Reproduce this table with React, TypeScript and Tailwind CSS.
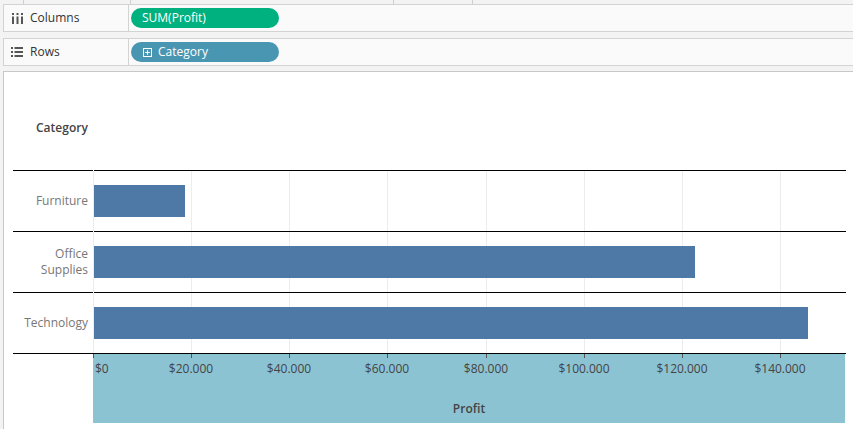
import React from "react"

const data = [
  { name: ["Furniture"], profit: 18451.27 },
  { name: ["Office", "Supplies"], profit: 122490.8 },
  { name: ["Technology"], profit: 145454.95 },
]

// pixels per dollar on the profit axis
const PX = 98.14 / 20000
const TICKS = [0, 20000, 40000, 60000, 80000, 100000, 120000, 140000]

const fmt = (v: number) => (v === 0 ? "$0" : "$" + (v / 1000).toFixed(0) + ".000")

function ColumnsIcon() {
  return (
    <svg width="11" height="11" viewBox="0 0 11 11" className="fill-[#555]">
      <rect x="0" y="0" width="2" height="2" />
      <rect x="4.5" y="0" width="2" height="2" />
      <rect x="9" y="0" width="2" height="2" />
      <rect x="0" y="3.5" width="2" height="7.5" />
      <rect x="4.5" y="3.5" width="2" height="7.5" />
      <rect x="9" y="3.5" width="2" height="7.5" />
    </svg>
  )
}

function RowsIcon() {
  return (
    <svg width="12" height="10" viewBox="0 0 12 10" className="fill-[#555]">
      <rect x="0" y="0" width="2" height="2" />
      <rect x="0" y="4" width="2" height="2" />
      <rect x="0" y="8" width="2" height="2" />
      <rect x="3.5" y="0" width="8.5" height="2" />
      <rect x="3.5" y="4" width="8.5" height="2" />
      <rect x="3.5" y="8" width="8.5" height="2" />
    </svg>
  )
}

function PlusBox() {
  return (
    <svg width="9" height="9" viewBox="0 0 9 9" fill="none" stroke="white" strokeWidth="1">
      <rect x="0.5" y="0.5" width="8" height="8" />
      <path d="M4.5 2.2v4.6M2.2 4.5h4.6" />
    </svg>
  )
}

function ShelfRow({ icon, label, children }: { icon: React.ReactNode; label: string; children: React.ReactNode }) {
  return (
    <div className="ml-[3px] h-[28px] flex border-y border-l border-[#d3d3d3] bg-[#fafafa]">
      <div className="w-[125px] flex items-center gap-[7px] pl-[7px] border-r border-[#d3d3d3] text-[12px] text-[#333]">
        <span className="w-[12px] flex justify-center">{icon}</span>
        {label}
      </div>
      <div className="ml-[2px] flex items-center">{children}</div>
    </div>
  )
}

export default function App() {
  return (
    <div className="w-[853px] h-[429px] bg-[#f3f3f3] overflow-hidden flex flex-col font-['Open_Sans',sans-serif]">
      {/* top strip */}
      <div className="h-[4px] flex shrink-0">
        <div className="w-[24px] border-r border-[#d0d0d0]" />
        <div className="w-[107px] border-r border-[#d0d0d0]" />
        <div className="w-[263px] border-r border-[#d0d0d0]" />
        <div className="w-[79px] border-r border-[#d0d0d0]" />
      </div>

      <ShelfRow icon={<ColumnsIcon />} label="Columns">
        <div className="w-[148px] h-[20px] rounded-full bg-[#00b180] text-white text-[12px] flex items-center pl-[11px]">
          SUM(Profit)
        </div>
      </ShelfRow>

      <div className="h-[6px] shrink-0" />

      <ShelfRow icon={<RowsIcon />} label="Rows">
        <div className="w-[148px] h-[20px] rounded-full bg-[#4996b2] text-white text-[12px] flex items-center pl-[12px] gap-[6px]">
          <PlusBox />
          Category
        </div>
      </ShelfRow>

      <div className="h-[5px] shrink-0" />

      {/* chart panel */}
      <div className="flex-1 ml-[3px] bg-white border-t border-l border-[#c8c8c8] text-[12px]">
        <div className="h-[98px] flex items-center pt-[13px] pl-[32px] text-[#444] font-semibold">Category</div>

        <div className="ml-[9px] w-[833px] relative">
          {/* gridlines */}
          <svg className="absolute left-[80px] top-[1px]" width="753" height="182">
            {TICKS.map((t) => (
              <line key={t} x1={Math.round(t * PX) + 0.5} x2={Math.round(t * PX) + 0.5} y1="0" y2="182" stroke="#ececec" />
            ))}
          </svg>

          {data.map((d) => (
            <div key={d.name.join(" ")} className="relative flex h-[61px]">
              <div className="w-[80px] border-t border-black flex flex-col justify-center items-end pr-[5px] text-[#777] leading-[16px]">
                {d.name.map((n) => (
                  <span key={n}>{n}</span>
                ))}
              </div>
              <div className="w-[1px]" />
              <div className="flex-1 border-t border-black pt-[14px]">
                <div className="h-[32px] bg-[#4e79a7]" style={{ width: Math.round(d.profit * PX) }} />
              </div>
            </div>
          ))}

          {/* axis */}
          <div className="flex border-t border-black">
            <div className="w-[80px]" />
            <div className="w-[752px] h-[69px] bg-[#8cc3d3] relative text-[#444]">
              {TICKS.map((t) => (
                <React.Fragment key={t}>
                  <div className="absolute top-0 w-[1px] h-[4px] bg-[#555]" style={{ left: Math.round(t * PX) }} />
                  <div
                    className="absolute top-[7px] leading-[16px] whitespace-nowrap"
                    style={
                      t === 0
                        ? { left: 2 }
                        : { left: Math.round(t * PX), transform: "translateX(-50%)" }
                    }
                  >
                    {fmt(t)}
                  </div>
                </React.Fragment>
              ))}
              <div className="absolute left-0 right-0 top-[47px] text-center text-[#444] font-semibold leading-[16px]">
                Profit
              </div>
            </div>
          </div>
        </div>
      </div>
    </div>
  )
}
